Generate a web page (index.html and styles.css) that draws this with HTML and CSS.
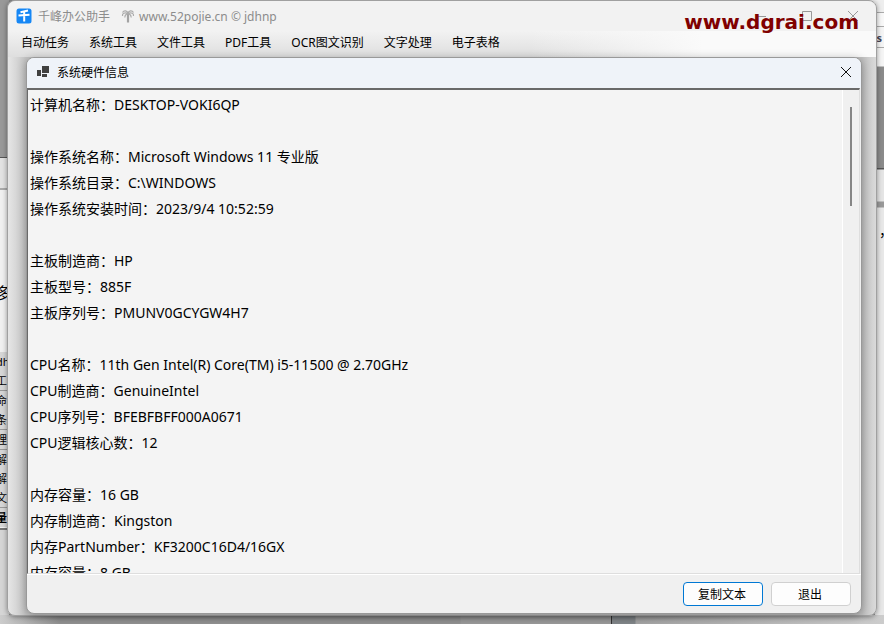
FILE: index.html
```html
<!DOCTYPE html>
<html lang="zh-CN">
<head>
    <meta charset="UTF-8">
    <meta name="viewport" content="width=device-width, initial-scale=1.0">
    <title>千峰办公助手</title>
    <link rel="stylesheet" href="styles.css">
</head>
<body>
    <!-- windows lying behind the app -->
    <div class="behind behind-top"></div>
    <div class="behind behind-left">
        <span class="behind-char">多</span>
        <div class="behind-menu">
            <span>dh</span><span>工</span><span class="ruled">命</span><span>条</span><span class="ruled">理</span><span class="ruled">解</span><span>解</span><span>文</span><span class="ruled strong">量</span>
        </div>
    </div>
    <div class="behind behind-right">
        <span class="behind-s">s</span>
        <span class="behind-comma">，</span>
    </div>
    <div class="behind behind-bottom"></div>

    <div class="app">
        <header class="app-title">
            <svg class="app-icon" viewBox="0 0 16 16">
                <rect x="0.5" y="0.5" width="15" height="15" rx="2.5" fill="#1687f5"/>
                <path d="M12 2.6 4.5 4.2M2.5 7.5 13.5 6.7M8.2 3.6V13.5" fill="none" stroke="#fff" stroke-width="2"/>
            </svg>
            <span>千峰办公助手</span>
            <svg class="palm" viewBox="0 0 14 14">
                <path d="M7 13.5V4" fill="none" stroke="#a3a3a3" stroke-width="2.2"/>
                <path d="M1.5 7C1 4.5 3.500 3 7 4.500C10.500 3 13 4.500 12.500 7M1.500 3.500C3 1 6 1.500 7 4C8 1.500 11 1 12.500 3.500M4 8.500C3.500 6.500 5 5 7 5C9 5 10.500 6.500 10 8.500" fill="none" stroke="#acacac" stroke-width="1.2"/>
            </svg>
            <span>www.52pojie.cn © jdhnp</span>
            <div class="window-buttons">
                <button type="button" aria-label="最小化"><svg viewBox="0 0 10 10"><path d="M0 5.500H10"/></svg></button>
                <button type="button" aria-label="最大化"><svg viewBox="0 0 10 10"><path d="M.5.500H9.500V9.500H.5Z"/></svg></button>
                <button type="button" aria-label="关闭"><svg viewBox="0 0 10 10"><path d="M0 0 10 10M10 0 0 10"/></svg></button>
            </div>
            <a class="watermark" href="#">www.dgrai.com</a>
        </header>
        <nav class="menu">
            <a href="#">自动任务</a>
            <a href="#">系统工具</a>
            <a href="#">文件工具</a>
            <a href="#">PDF工具</a>
            <a href="#">OCR图文识别</a>
            <a href="#">文字处理</a>
            <a href="#">电子表格</a>
        </nav>

        <section class="dialog" role="dialog" aria-labelledby="dialogTitle">
            <header class="dialog-title">
                <svg class="dialog-icon" viewBox="0 0 13 12">
                    <path d="M5 0H12V7H5ZM0 4H4V10H0ZM5 8H10V11H5Z" fill="#404040"/>
                </svg>
                <h1 id="dialogTitle">系统硬件信息</h1>
                <button type="button" class="dialog-close" aria-label="关闭对话框"><svg viewBox="0 0 10 10"><path d="M0 0 10 10M10 0 0 10"/></svg></button>
            </header>
            <div class="report">
                <div class="report-text">
                    <p>计算机名称：DESKTOP-VOKI6QP</p>
                    <p></p>
                    <p>操作系统名称：Microsoft Windows 11 专业版</p>
                    <p>操作系统目录：C:\WINDOWS</p>
                    <p>操作系统安装时间：2023/9/4 10:52:59</p>
                    <p></p>
                    <p>主板制造商：HP</p>
                    <p>主板型号：885F</p>
                    <p>主板序列号：PMUNV0GCYGW4H7</p>
                    <p></p>
                    <p>CPU名称：11th Gen Intel(R) Core(TM) i5-11500 @ 2.70GHz</p>
                    <p>CPU制造商：GenuineIntel</p>
                    <p>CPU序列号：BFEBFBFF000A0671</p>
                    <p>CPU逻辑核心数：12</p>
                    <p></p>
                    <p>内存容量：16 GB</p>
                    <p>内存制造商：Kingston</p>
                    <p>内存PartNumber：KF3200C16D4/16GX</p>
                    <p>内存容量：8 GB</p>
                </div>
                <div class="scroll-track"><div class="scroll-thumb"></div></div>
            </div>
            <footer class="dialog-actions">
                <button type="button" class="btn btn-default">复制文本</button>
                <button type="button" class="btn">退出</button>
            </footer>
        </section>
    </div>
</body>
</html>
```
FILE: styles.css
```css
* {
    box-sizing: border-box;
}
body {
    margin: 0;
    height: 100vh;
    padding: 0 7px 8px;
    position: relative;
    overflow: hidden;
    background: #9a9a9a;
    font-family: "Noto Sans", "Noto Sans CJK SC", sans-serif;
    font-size: 12px;
    color: #000;
}
.app {
    position: relative;
    height: 100%;
    display: flex;
    flex-direction: column;
    padding: 0 14px 1px 18px;
    border: 1px solid #a0a0a0;
    border-radius: 8px;
    background: linear-gradient(to right, #e6e6e6, #c4c4c4 18px, #c0c0c0 calc(100% - 14px), #dadada);
    box-shadow: 0 1px 5px rgba(0,0,0,0.4);
}
.app-title {
    display: flex;
    align-items: center;
    height: 30px;
    margin: 0 -14px 0 -18px;
    padding-left: 8px;
    border-radius: 8px 8px 0 0;
    background: #f2f2f2;
    color: #8c8c8c;
}
.app-icon {
    width: 16px;
    height: 16px;
    margin-right: 6px;
}
.palm {
    width: 14px;
    height: 14px;
    margin: 0 4px 0 11px;
}
.window-buttons {
    display: flex;
    margin-left: auto;
}
.window-buttons button {
    width: 46px;
    height: 28px;
    padding: 0;
    border: 0;
    background: none;
}
.window-buttons svg,
.dialog-close svg {
    width: 10px;
    height: 10px;
    fill: none;
    stroke: #999;
}
.watermark {
    position: absolute;
    top: 6px;
    right: 17px;
    font: bold 20px/30px "DejaVu Sans", sans-serif;
    color: #800000;
    text-decoration: none;
}
.menu {
    display: flex;
    gap: 20px;
    height: 26px;
    margin: 0 -14px 0 -18px;
    padding-left: 13px;
    background: linear-gradient(to right, transparent 60%, #fafafa 80%), linear-gradient(#f2f2f2, #dedede);
    line-height: 24px;
}
.menu a {
    color: #000;
    text-decoration: none;
}
.dialog {
    flex: 1;
    min-height: 0;
    display: flex;
    flex-direction: column;
    overflow: hidden;
    border: 1px solid #999;
    border-radius: 8px;
    background: #f0f0f0;
    box-shadow: 0 2px 10px rgba(0,0,0,0.3);
}
.dialog-title {
    display: flex;
    align-items: center;
    height: 30px;
    padding: 0 0 2px 10px;
    background: #eff3f9;
}
.dialog-icon {
    width: 13px;
    height: 12px;
    margin-right: 7px;
}
.dialog-title h1 {
    margin: 0;
    font-size: 12px;
    font-weight: normal;
}
.dialog-close {
    width: 30px;
    height: 28px;
    margin-left: auto;
    padding: 0;
    border: 0;
    background: none;
}
.dialog-close svg {
    stroke: #111;
}
.report {
    flex: 1;
    min-height: 0;
    display: flex;
    margin-right: 1px;
    border: 1px solid #dedede;
    border-top: 2px solid #696969;
    border-left-color: #696969;
    background: #f4f4f4;
}
.report-text {
    flex: 1;
    padding: 2px;
    overflow: hidden;
    font-size: 14px;
}
.report-text p {
    height: 26px;
    margin: 0;
    line-height: 26px;
}
.scroll-track {
    width: 17px;
    padding: 17px 0 0 7px;
    border-left: 1px solid #fff;
    background: #f0f0f0;
}
.scroll-thumb {
    width: 2px;
    height: 99px;
    background: #858585;
}
.dialog-actions {
    display: flex;
    justify-content: flex-end;
    gap: 8px;
    padding: 7px 10px 7px;
    border-top: 1px solid #fff;
}
.btn {
    width: 80px;
    height: 24px;
    padding: 0 2px 0 0;
    border: 1px solid #d0d0d0;
    border-radius: 4px;
    background: #fdfdfd;
    color: #000;
    font: inherit;
}
.btn-default {
    border-color: #0078d4;
}
/* desktop behind the app */
.behind {
    position: absolute;
    overflow: hidden;
}
.behind-top {
    top: 0;
    left: 0;
    width: 100%;
    height: 9px;
    background: linear-gradient(to right, #888 460px, #bbb 461px 760px, #eee 761px);
}
.behind-left {
    top: 0;
    left: 0;
    width: 9px;
    height: 100%;
    background: linear-gradient(#999 0 157px, #555 157px 158px, #e2e2e2 158px 188px, #aaa 188px 190px, #f0f0f0 190px 528px, #777 528px 530px, #d5d5d5 530px);
}
.behind-char {
    position: absolute;
    top: 280px;
    left: -5px;
    font: 16px/24px "Noto Sans CJK SC", sans-serif;
}
.behind-menu {
    position: absolute;
    top: 352px;
    left: -4px;
    display: flex;
    flex-direction: column;
    background: #d6d6d6;
    font-size: 11px;
    line-height: 19px;
}
.behind-menu .ruled {
    border-top: 1px solid #999;
}
.behind-menu .strong {
    font-weight: bold;
}
.behind-right {
    top: 0;
    right: 0;
    width: 9px;
    height: 100%;
    background: linear-gradient(#eee 0 12px, #aaa 12px 13px, #f8f8f8 13px 26px, #aaa 26px 27px, #f5f5f5 27px 47px, #aaa 47px 48px, #f5f5f5 48px 66px, #8b8b8b 67px 168px, #555 168px 169px, #e5e5e5 170px 201px, #999 202px 207px, #e8e8e8 208px);
}
.behind-s {
    position: absolute;
    top: 30px;
    right: 2px;
    font-size: 11px;
    font-weight: bold;
    color: #445;
}
.behind-comma {
    position: absolute;
    top: 220px;
    left: 4px;
    font-size: 14px;
}
.behind-bottom {
    bottom: 0;
    left: 0;
    width: 100%;
    height: 9px;
    background: linear-gradient(to right, #ccc, #909090 60px 460px, #989898 461px 611px, #333 611px 612px, #808588 612px 635px, #a2a2a2 636px, #ccc);
}
```
